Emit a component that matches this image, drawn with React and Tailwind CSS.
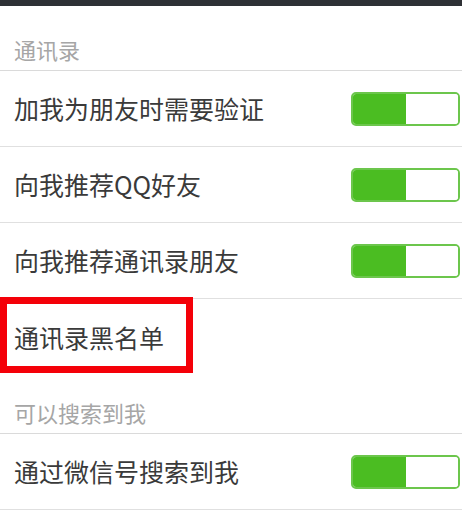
import React from 'react';

const font = { fontFamily: '"Noto Sans CJK SC", "Noto Sans", sans-serif' };

function Toggle() {
  return (
    <div className="flex w-[109px] h-[34px] rounded-[5px] border-2 border-[#6cc64c] bg-white overflow-hidden">
      <div className="w-[53px] h-full bg-[#4bbd22]" />
      <div className="flex-1 bg-white" />
    </div>
  );
}

function Header({ label, className }) {
  return (
    <div className={`flex items-end pl-[14px] pb-[9px] border-b border-[#dadada] ${className}`}>
      <span className="text-[22px] leading-[23px] text-[#a6a6a6]">{label}</span>
    </div>
  );
}

function Row({ label, toggle = true, last = false, marked = false }) {
  return (
    <div
      className={`relative flex items-center justify-between pl-[14px] pr-[2px] h-[76px] ${
        last ? '' : 'border-b border-[#e0e0e0]'
      }`}
    >
      <span className="text-[25px] leading-[27px] text-[#3a3a3a]">{label}</span>
      {toggle && <Toggle />}
      {marked && (
        <div className="absolute left-0 top-[-2px] w-[193px] h-[76px] border-[7px] border-[#f40008]" />
      )}
    </div>
  );
}

export default function App() {
  return (
    <div className="w-[462px] h-[514px] bg-white overflow-hidden" style={font}>
      <div className="h-[6px] bg-[#2e3135]" />
      <Header label="通讯录" className="h-[65px]" />
      <Row label="加我为朋友时需要验证" />
      <Row label="向我推荐QQ好友" />
      <Row label="向我推荐通讯录朋友" />
      <Row label="通讯录黑名单" toggle={false} last marked />
      <Header label="可以搜索到我" className="h-[59px]" />
      <Row label="通过微信号搜索到我" />
    </div>
  );
}
